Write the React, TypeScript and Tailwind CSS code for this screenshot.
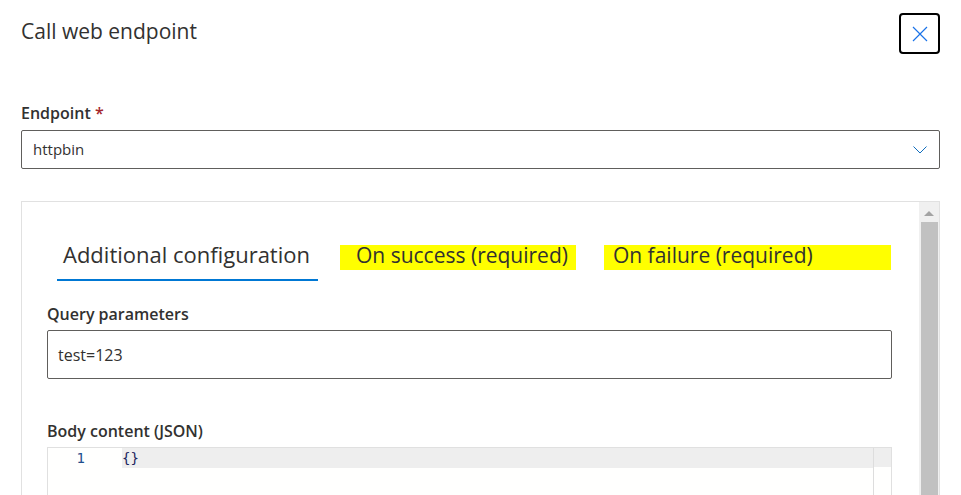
import React from "react";

const font = { fontFamily: '"Segoe UI", "Open Sans", sans-serif' };
const mono = { fontFamily: '"DejaVu Sans Mono", monospace' };

const Highlight: React.FC<{ children: React.ReactNode; className?: string }> = ({ children, className }) => (
  <span className={`bg-[#ffff00] h-[25px] leading-[21px] text-[21px] whitespace-nowrap ${className ?? ""}`}>{children}</span>
);

const App: React.FC = () => {
  return (
    <div className="w-[961px] h-[495px] overflow-hidden bg-white px-[21px] text-[#323130]" style={font}>
      {/* header */}
      <div className="flex justify-between items-start pt-[13px]">
        <h1 className="mt-[4px] text-[21px] leading-[28px] font-normal">Call web endpoint</h1>
        <button className="w-[41px] h-[41px] border-2 border-black rounded-[4px] flex items-center justify-center">
          <svg width="16" height="16" viewBox="0 0 16 16" fill="none" stroke="#1a73e8" strokeWidth="1.2">
            <path d="M1 1 L15 15 M15 1 L1 15" />
          </svg>
        </button>
      </div>

      {/* endpoint */}
      <div className="mt-[49px] text-[16px] leading-[20px] font-semibold">
        Endpoint <span className="text-[#a4262c]">*</span>
      </div>
      <div className="mt-[7px] h-[39px] border border-[#605e5c] rounded-[2px] flex items-center justify-between pl-[11px] pr-[12px]">
        <span className="text-[15px]">httpbin</span>
        <svg width="14" height="8" viewBox="0 0 14 8" fill="none" stroke="#0f6cbd" strokeWidth="1">
          <path d="M0.5 0.5 L7 7 L13.5 0.5" />
        </svg>
      </div>

      {/* panel */}
      <div className="mt-[32px] h-[300px] border border-[#e1e1e1] flex">
        <div className="flex-1 pl-[25px] pr-[27px]">
          <div className="flex items-end mt-[38px] ml-[10px]">
            <div className="pl-[6px] pr-[8px] pb-[11px] text-[22px] leading-[28px] border-b-2 border-[#0078d4] whitespace-nowrap">
              Additional configuration
            </div>
            <Highlight className="ml-[22px] pl-[16px] pr-[8px] mb-[11px]">On success (required)</Highlight>
            <Highlight className="ml-[28px] pl-[9px] pr-[78px] mb-[11px]">On failure (required)</Highlight>
          </div>
          <div className="mt-[23px] text-[16px] leading-[20px] font-semibold">Query parameters</div>
          <div className="mt-[6px] h-[49px] border border-[#605e5c] rounded-[2px] flex items-center pl-[10px] text-[16px]">
            test=123
          </div>
          <div className="mt-[42px] text-[16px] leading-[20px] font-semibold">Body content (JSON)</div>
          <div className="mt-[6px] h-[80px] border border-[#e0e0e0] bg-[#fffffe] flex">
            <div className="flex-1 flex">
              <div className="w-[74px] h-[20px] pr-[37px] text-right text-[14px] leading-[20px] text-[#1f4e8c]" style={mono}>
                1
              </div>
              <div className="flex-1 h-[20px] bg-[#eeeeee] text-[14px] leading-[20px] text-[#1c2660]" style={mono}>
                {"{}"}
              </div>
            </div>
            <div className="w-[18px] border-l border-[#dddddd] flex flex-col">
              <div className="h-[19px] bg-[#eeeeee]" />
            </div>
          </div>
        </div>
        {/* scrollbar */}
        <div className="w-[20px] bg-[#f0f0f0] flex flex-col items-center">
          <div className="mt-[9px] w-0 h-0 border-l-[5px] border-r-[5px] border-b-[5px] border-l-transparent border-r-transparent border-b-[#a3a3a3]" />
          <div className="mt-[6px] w-[17px] flex-1 bg-[#c1c1c1]" />
        </div>
      </div>
    </div>
  );
};

export default App;
